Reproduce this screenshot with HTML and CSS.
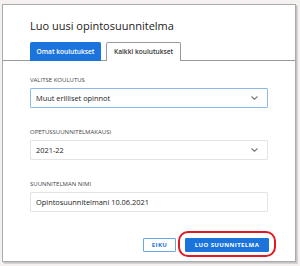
FILE: index.html
```html
<!DOCTYPE html>
<html lang="fi">
<head>
<meta charset="utf-8">
<link rel="stylesheet" href="styles.css">
</head>
<body>
<div class="dialog">
  <h1 class="title">Luo uusi opintosuunnitelma</h1>
  <div class="tabs">
    <div class="tab active">Omat koulutukset</div>
    <div class="tab">Kaikki koulutukset</div>
  </div>
  <div class="content">
    <div class="field">
      <div class="label">Valitse koulutus</div>
      <div class="control select focused">
        <span>Muut erilliset opinnot</span>
        <svg class="chev" width="7" height="4" viewBox="0 0 7 4"><path d="M0.5 0.5 L3.5 3.2 L6.5 0.5" fill="none" stroke="#777" stroke-width="1.1"/></svg>
      </div>
    </div>
    <div class="field">
      <div class="label">Opetussuunnitelmakausi</div>
      <div class="control select">
        <span>2021-22</span>
        <svg class="chev" width="7" height="4" viewBox="0 0 7 4"><path d="M0.5 0.5 L3.5 3.2 L6.5 0.5" fill="none" stroke="#777" stroke-width="1.1"/></svg>
      </div>
    </div>
    <div class="field">
      <div class="label">Suunnitelman nimi</div>
      <div class="control">
        <span>Opintosuunnitelmani 10.06.2021</span>
      </div>
    </div>
    <div class="actions">
      <button class="btn secondary">Eiku</button>
      <div class="highlight-wrap">
        <button class="btn primary">Luo suunnitelma</button>
        <span class="highlight"></span>
      </div>
    </div>
  </div>
</div>
</body>
</html>
```
FILE: styles.css
```css
html, body {
  margin: 0;
  padding: 0;
}
body {
  background: #f6f1f1;
  font-family: "Open Sans", "Noto Sans", sans-serif;
  color: #222;
  width: 300px;
  height: 266px;
  overflow: hidden;
}
.dialog {
  box-sizing: border-box;
  margin: 4px 0 0 2px;
  width: 294px;
  height: 258px;
  background: #fff;
  border: 1px solid #ababab;
  box-shadow: 1px 1px 0 #c4c4c4, 2px 2px 0 #d6d6d6;
}
.title {
  margin: 0;
  padding: 14px 0 0 27px;
  font-size: 11px;
  font-weight: 400;
  line-height: 14px;
  color: #222;
}
.tabs {
  display: flex;
  gap: 5px;
  margin-top: 9px;
  padding-left: 27px;
  border-bottom: 1px solid #9a9a9a;
  height: 18px;
  align-items: flex-end;
}
.tab {
  box-sizing: border-box;
  height: 19px;
  margin-bottom: -1px;
  padding: 0 7px;
  font-size: 6.6px;
  font-weight: 600;
  line-height: 18px;
  white-space: nowrap;
  color: #333;
  border: 1px solid #9a9a9a;
  border-bottom: none;
  border-radius: 2px 2px 0 0;
  background: #fff;
}
.tab.active {
  background: #1b74db;
  border-color: #1b74db;
  color: #fff;
  width: 71px;
  padding: 0;
  text-align: center;
}
.content {
  padding: 15px 27px 0 27px;
}
.field {
  margin-bottom: 20px;
}
.label {
  font-size: 6px;
  text-transform: uppercase;
  color: #444;
  line-height: 8px;
  margin-bottom: 4px;
}
.control {
  box-sizing: border-box;
  height: 20px;
  border: 1px solid #e4e4e4;
  border-radius: 1px;
  display: flex;
  align-items: center;
  justify-content: space-between;
  padding: 0 9px 0 5px;
  font-size: 7.4px;
  color: #222;
}
.control.focused {
  border-color: #8cbaea;
}
.chev {
  display: block;
}
.actions {
  display: flex;
  justify-content: flex-end;
  align-items: flex-start;
  gap: 9px;
  padding-top: 6px;
  margin-right: -1px;
}
.btn {
  box-sizing: border-box;
  height: 14px;
  padding: 0 5px;
  font-family: inherit;
  font-size: 6px;
  font-weight: 700;
  letter-spacing: 0.4px;
  text-transform: uppercase;
  border-radius: 1px;
  cursor: pointer;
  line-height: 12px;
}
.btn.secondary {
  width: 33px;
  background: #fff;
  color: #1b74db;
  border: 1px solid #6aa5e6;
}
.btn.primary {
  width: 84px;
  background: #1b74db;
  color: #fff;
  border: 1px solid #1b74db;
}
.highlight-wrap {
  position: relative;
  display: flex;
}
.highlight {
  position: absolute;
  left: -7px;
  top: -7px;
  right: -7px;
  bottom: -5px;
  border: 2px solid #e01a22;
  border-radius: 10px;
  pointer-events: none;
}
```
